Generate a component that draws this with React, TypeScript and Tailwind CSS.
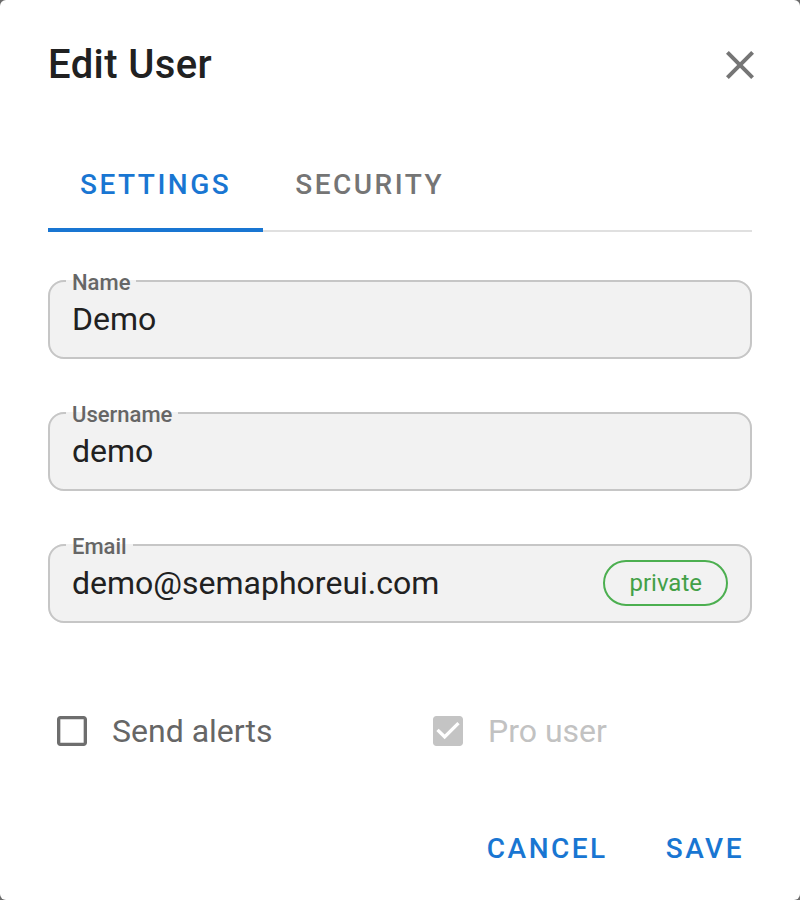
import React from "react";

function Field({ label, value, chip }: { label: string; value: string; chip?: string }) {
  return (
    <fieldset className="border-2 border-[#c6c6c6] rounded-[16px] bg-[#f2f2f2] px-[22px] pt-[3px] pb-[18px] m-0 min-w-0">
      <legend className="px-[6px] ml-[-6px] pt-[4px] text-[22px] leading-[26px] font-medium text-[#666666]">{label}</legend>
      <div className="flex items-center justify-between h-[40px]">
        <span className="text-[32px] leading-[40px] text-[#212121]">{value}</span>
        {chip && (
          <span className="h-[46px] px-[24px] rounded-full border-2 border-[#4caf50] text-[#43a047] text-[24px] leading-[42px] shrink-0">
            {chip}
          </span>
        )}
      </div>
    </fieldset>
  );
}

export default function App() {
  return (
    <div className="w-[800px] h-[900px] bg-[#6b6b6b]" style={{ fontFamily: "Roboto, 'Noto Sans', sans-serif" }}>
      <div className="w-full h-full bg-white rounded-[6px] flex flex-col px-12">
        <div className="flex items-center justify-between pt-[41px] h-[89px]">
          <h1 className="text-[40px] leading-[48px] font-medium text-[#212121] tracking-[0.4px]">Edit User</h1>
          <svg viewBox="0 0 24 24" className="w-[48px] h-[48px] -mr-3 fill-[#757575]">
            <path d="M19 6.41L17.59 5 12 10.59 6.41 5 5 6.41 10.59 12 5 17.59 6.41 19 12 13.41 17.59 19 19 17.59 13.41 12z" />
          </svg>
        </div>

        <div className="mt-[47px] flex h-[96px] border-b-2 border-[#e0e0e0]">
          <div className="relative px-8 pt-[4px] flex items-center text-[28px] font-medium tracking-[2.5px] text-[#1976d2]">
            SETTINGS
            <div className="absolute left-0 right-0 bottom-[-2px] h-[4px] bg-[#1976d2]" />
          </div>
          <div className="px-8 pt-[4px] flex items-center text-[28px] font-medium tracking-[2.5px] text-[#757575]">SECURITY</div>
        </div>

        <div className="mt-[34px] flex flex-col gap-[39px]">
          <Field label="Name" value="Demo" />
          <Field label="Username" value="demo" />
          <Field label="Email" value="demo@semaphoreui.com" chip="private" />
        </div>

        <div className="mt-[88px] flex h-[40px] items-center">
          <div className="w-[376px] flex items-center pl-[4px]">
            <svg viewBox="0 0 24 24" className="w-[40px] h-[40px] fill-[#6e6e6e]">
              <path d="M19 5v14H5V5h14m0-2H5c-1.1 0-2 .9-2 2v14c0 1.1.9 2 2 2h14c1.1 0 2-.9 2-2V5c0-1.1-.9-2-2-2z" />
            </svg>
            <span className="ml-[20px] text-[32px] leading-[40px] text-[#666666]">Send alerts</span>
          </div>
          <div className="flex items-center pl-[4px]">
            <svg viewBox="0 0 24 24" className="w-[40px] h-[40px] fill-[#c4c4c4]">
              <path d="M19 3H5c-1.11 0-2 .9-2 2v14c0 1.1.89 2 2 2h14c1.11 0 2-.9 2-2V5c0-1.1-.89-2-2-2zm-9 14l-5-5 1.41-1.41L10 14.17l7.59-7.59L19 8l-9 9z" />
            </svg>
            <span className="ml-[20px] text-[32px] leading-[40px] text-[#c2c2c2]">Pro user</span>
          </div>
        </div>

        <div className="mt-auto mb-[27px] flex justify-end items-center h-[48px]">
          <button className="text-[28px] font-medium tracking-[2.5px] text-[#1976d2]">CANCEL</button>
          <button className="ml-[58px] mr-[8px] text-[28px] font-medium tracking-[2.5px] text-[#1976d2]">SAVE</button>
        </div>
      </div>
    </div>
  );
}
